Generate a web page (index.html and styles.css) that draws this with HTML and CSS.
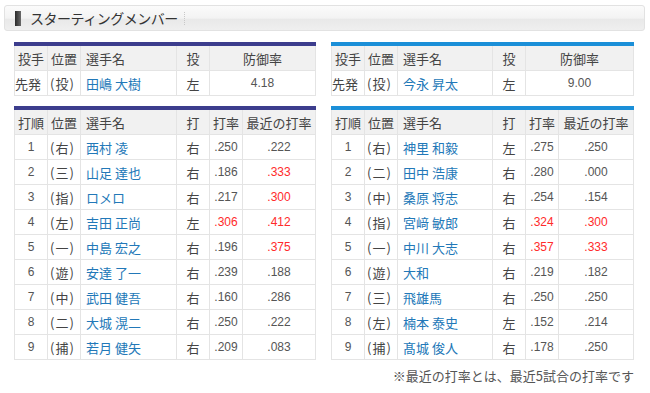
FILE: index.html
```html
<!DOCTYPE html>
<html lang="ja">
<head>
<meta charset="utf-8">
<link rel="stylesheet" href="styles.css">
</head>
<body>
<div class="page">
  <div class="title-bar">
    <span class="title-icon"></span>
    <span class="title-text">スターティングメンバー</span>
    <span class="title-sep"></span>
  </div>
  <div class="columns">
    <div class="team">
      <table class="tbl pitch navy">
        <colgroup><col class="c1"><col class="c2"><col class="c3"><col class="c4"><col></colgroup>
        <tr class="head"><th class="l">投手</th><th class="l">位置</th><th class="l name-h">選手名</th><th>投</th><th>防御率</th></tr>
        <tr><td class="l">先発</td><td class="pos">(投)</td><td class="name">田嶋 大樹</td><td>左</td><td class="num">4.18</td></tr>
      </table>
      <table class="tbl bat navy">
        <colgroup><col class="c1"><col class="c2"><col class="c3"><col class="c4"><col class="c5"><col></colgroup>
        <tr class="head"><th class="l">打順</th><th class="l">位置</th><th class="l name-h">選手名</th><th>打</th><th>打率</th><th>最近の打率</th></tr>
        <tr><td class="num">1</td><td class="pos">(右)</td><td class="name">西村 凌</td><td>右</td><td class="num">.250</td><td class="num">.222</td></tr>
        <tr><td class="num">2</td><td class="pos">(三)</td><td class="name">山足 達也</td><td>右</td><td class="num">.186</td><td class="num red">.333</td></tr>
        <tr><td class="num">3</td><td class="pos">(指)</td><td class="name">ロメロ</td><td>右</td><td class="num">.217</td><td class="num red">.300</td></tr>
        <tr><td class="num">4</td><td class="pos">(左)</td><td class="name">吉田 正尚</td><td>左</td><td class="num red">.306</td><td class="num red">.412</td></tr>
        <tr><td class="num">5</td><td class="pos">(一)</td><td class="name">中島 宏之</td><td>右</td><td class="num">.196</td><td class="num red">.375</td></tr>
        <tr><td class="num">6</td><td class="pos">(遊)</td><td class="name">安達 了一</td><td>右</td><td class="num">.239</td><td class="num">.188</td></tr>
        <tr><td class="num">7</td><td class="pos">(中)</td><td class="name">武田 健吾</td><td>右</td><td class="num">.160</td><td class="num">.286</td></tr>
        <tr><td class="num">8</td><td class="pos">(二)</td><td class="name">大城 滉二</td><td>右</td><td class="num">.250</td><td class="num">.222</td></tr>
        <tr><td class="num">9</td><td class="pos">(捕)</td><td class="name">若月 健矢</td><td>右</td><td class="num">.209</td><td class="num">.083</td></tr>
      </table>
    </div>
    <div class="team">
      <table class="tbl pitch blue">
        <colgroup><col class="c1"><col class="c2"><col class="c3r"><col class="c4"><col></colgroup>
        <tr class="head"><th class="l">投手</th><th class="l">位置</th><th class="l name-h">選手名</th><th>投</th><th>防御率</th></tr>
        <tr><td class="l">先発</td><td class="pos">(投)</td><td class="name">今永 昇太</td><td>左</td><td class="num">9.00</td></tr>
      </table>
      <table class="tbl bat blue">
        <colgroup><col class="c1"><col class="c2"><col class="c3r"><col class="c4"><col class="c5"><col></colgroup>
        <tr class="head"><th class="l">打順</th><th class="l">位置</th><th class="l name-h">選手名</th><th>打</th><th>打率</th><th>最近の打率</th></tr>
        <tr><td class="num">1</td><td class="pos">(右)</td><td class="name">神里 和毅</td><td>左</td><td class="num">.275</td><td class="num">.250</td></tr>
        <tr><td class="num">2</td><td class="pos">(二)</td><td class="name">田中 浩康</td><td>右</td><td class="num">.280</td><td class="num">.000</td></tr>
        <tr><td class="num">3</td><td class="pos">(中)</td><td class="name">桑原 将志</td><td>右</td><td class="num">.254</td><td class="num">.154</td></tr>
        <tr><td class="num">4</td><td class="pos">(指)</td><td class="name">宮﨑 敏郎</td><td>右</td><td class="num red">.324</td><td class="num red">.300</td></tr>
        <tr><td class="num">5</td><td class="pos">(一)</td><td class="name">中川 大志</td><td>右</td><td class="num red">.357</td><td class="num red">.333</td></tr>
        <tr><td class="num">6</td><td class="pos">(遊)</td><td class="name">大和</td><td>右</td><td class="num">.219</td><td class="num">.182</td></tr>
        <tr><td class="num">7</td><td class="pos">(三)</td><td class="name">飛雄馬</td><td>右</td><td class="num">.250</td><td class="num">.250</td></tr>
        <tr><td class="num">8</td><td class="pos">(左)</td><td class="name">楠本 泰史</td><td>左</td><td class="num">.152</td><td class="num">.214</td></tr>
        <tr><td class="num">9</td><td class="pos">(捕)</td><td class="name">髙城 俊人</td><td>右</td><td class="num">.178</td><td class="num">.250</td></tr>
      </table>
      <p class="note">※最近の打率とは、最近5試合の打率です</p>
    </div>
  </div>
</div>
</body>
</html>
```

FILE: styles.css
```css
html, body {
  margin: 0;
  padding: 0;
  background: #fff;
}
body {
  font-family: "Liberation Sans", "Noto Sans CJK JP", sans-serif;
  color: #444;
}
.page {
  padding: 5px 5px 0 4px;
}
.title-bar {
  height: 24px;
  border: 1px solid #e2e2e2;
  border-radius: 3px;
  background: linear-gradient(to bottom, #fbfbfb 0%, #f3f3f3 50%, #e9e9e9 56%, #efefef 100%);
  display: flex;
  align-items: center;
  padding-left: 10px;
}
.title-icon {
  width: 6px;
  height: 15px;
  background: linear-gradient(to right, #2a2a2a, #6a6a6a);
  margin-right: 9px;
}
.title-text {
  font-family: "Noto Sans CJK JP", sans-serif;
  font-size: 14px;
  color: #333;
  letter-spacing: -0.5px;
}
.title-sep {
  width: 0;
  height: 13px;
  border-left: 1px dotted #c8c8c8;
  margin-left: 6px;
}
.columns {
  display: grid;
  grid-template-columns: 302px 303px;
  column-gap: 15px;
  padding: 11px 0 0 10px;
}
.tbl {
  width: 100%;
  border-collapse: collapse;
  table-layout: fixed;
  font-size: 13px;
}
.tbl.navy { border-top: 4px solid #3c3d8d; }
.tbl.blue { border-top: 4px solid #1b8fd8; }
.tbl.bat { margin-top: 10px; }
.c1 { width: 33px; }
.c2 { width: 33px; }
.c3 { width: 96px; }
.c3r { width: 95px; }
.c4 { width: 33px; }
.c5 { width: 33px; }
.tbl th, .tbl td {
  border: 1px solid #e4e4e4;
  height: 24px;
  padding: 0;
  text-align: center;
  font-weight: normal;
  white-space: nowrap;
  color: #444;
  font-family: "Noto Sans CJK JP", sans-serif;
}
.tbl th {
  background: #f1f1f1;
}
.tbl .l {
  text-align: left;
  padding-left: 3px;
}
.tbl td.l { padding-left: 0; }
.tbl td.pos {
  text-align: left;
  padding-left: 2px;
  letter-spacing: 1px;
}
.tbl .name-h { padding-left: 5px; }
.tbl td.name {
  text-align: left;
  padding-left: 5px;
  color: #2278b8;
}
.tbl td.num {
  font-family: "Liberation Sans", sans-serif;
  font-size: 12px;
  color: #555;
}
.tbl td.red { color: #ff2b2b; }
.note {
  margin: 6px 0 0;
  text-align: right;
  font-family: "Noto Sans CJK JP", sans-serif;
  font-size: 13px;
  color: #555;
}
```
